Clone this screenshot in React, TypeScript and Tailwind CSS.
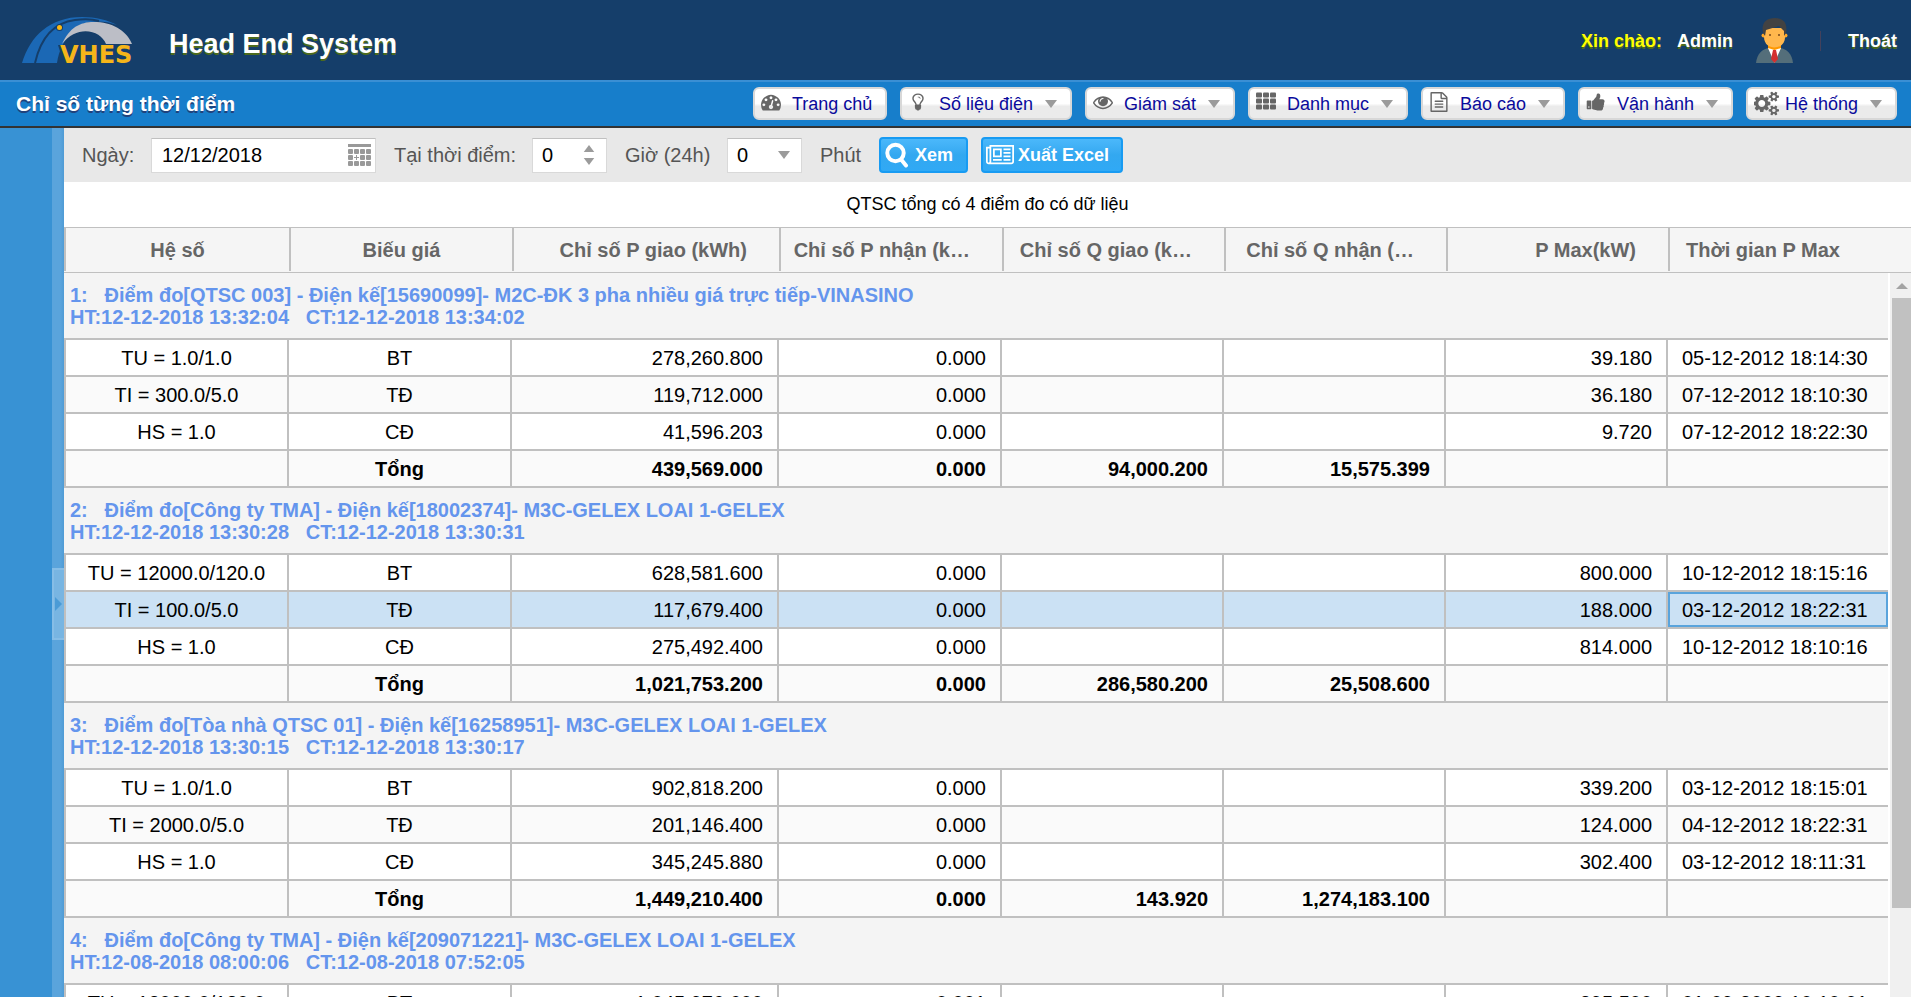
import type { ReactNode } from "react";
import clsx from "clsx";

type IconProps = { className?: string };

const DashboardIcon = ({ className }: IconProps) => (
  <svg viewBox="0 0 1792 1792" fill="currentColor" className={className}>
    <path d="M384 1152q0-53-37.5-90.5t-90.5-37.5-90.5 37.5-37.5 90.5 37.5 90.5 90.5 37.5 90.5-37.5 37.5-90.5zm192-448q0-53-37.5-90.5t-90.5-37.5-90.5 37.5-37.5 90.5 37.5 90.5 90.5 37.5 90.5-37.5 37.5-90.5zm428 481l101-382q6-26-7.5-48.5t-38.5-29.5-48 6.5-30 39.5l-101 382q-60 5-107 43.5t-63 98.5q-20 77 20 146t117 89 146-20 89-117q16-60-6-117t-72-91zm660-33q0-53-37.5-90.5t-90.5-37.5-90.5 37.5-37.5 90.5 37.5 90.5 90.5 37.5 90.5-37.5 37.5-90.5zm-640-640q0-53-37.5-90.5t-90.5-37.5-90.5 37.5-37.5 90.5 37.5 90.5 90.5 37.5 90.5-37.5 37.5-90.5zm448 192q0-53-37.5-90.5t-90.5-37.5-90.5 37.5-37.5 90.5 37.5 90.5 90.5 37.5 90.5-37.5 37.5-90.5zm320 448q0 261-141 483-19 29-54 29h-1402q-35 0-54-29-141-221-141-483 0-182 71-348t191-286 286-191 348-71 348 71 286 191 191 286 71 348z" />
  </svg>
);

const BulbIcon = ({ className }: IconProps) => (
  <svg viewBox="0 0 1792 1792" fill="currentColor" className={className}>
    <path d="M1120 576q0 13-9.5 22.5t-22.5 9.5-22.5-9.5-9.5-22.5q0-46-54-71t-106-25q-13 0-22.5-9.5t-9.5-22.5 9.5-22.5 22.5-9.5q50 0 99.5 16t87 54 37.5 90zm160 0q0-72-34.5-134t-90-101.5-123-62-136.5-22.5-136.5 22.5-123 62-90 101.5-34.5 134q0 101 68 180 10 11 30.5 33t30.5 33q128 153 141 298h228q13-145 141-298 10-11 30.5-33t30.5-33q68-79 68-180zm128 0q0 155-103 268-45 49-74.5 87t-59.5 95.5-34 107.5q47 28 47 82 0 37-25 64 25 27 25 64 0 52-45 81 13 23 13 47 0 46-31.5 71t-77.5 25q-20 44-60 70t-87 26-87-26-60-70q-46 0-77.5-25t-31.5-71q0-24 13-47-45-29-45-81 0-37 25-64-25-27-25-64 0-54 47-82-4-50-34-107.5t-59.5-95.5-74.5-87q-103-113-103-268 0-99 44.5-184.5t117-142 164-89 186.5-32.5 186.5 32.5 164 89 117 142 44.5 184.5z" />
  </svg>
);

const EyeIcon = ({ className }: IconProps) => (
  <svg viewBox="0 0 1792 1792" fill="currentColor" className={className}>
    <path d="M1664 960q-152-236-381-353 61 104 61 225 0 185-131.5 316.5t-316.5 131.5-316.5-131.5-131.5-316.5q0-121 61-225-229 117-381 353 133 205 333.5 326.5t434.5 121.5 434.5-121.5 333.5-326.5zm-720-384q0-20-14-34t-34-14q-125 0-214.5 89.5t-89.5 214.5q0 20 14 34t34 14 34-14 14-34q0-86 61-147t147-61q20 0 34-14t14-34zm848 384q0 34-20 69-140 230-376.5 368.5t-499.5 138.5-499.5-139-376.5-368q-20-35-20-69t20-69q140-229 376.5-368t499.5-139 499.5 139 376.5 368q20 35 20 69z" />
  </svg>
);

const GridIcon = ({ className }: IconProps) => (
  <svg viewBox="0 0 21 20" fill="currentColor" className={className}>
    {[2, 8, 14].map((y) =>
      [0, 7, 14].map((x) => (
        <rect key={`${x}-${y}`} x={x} y={y} width="6" height="5" rx="1" />
      ))
    )}
  </svg>
);

const FileIcon = ({ className }: IconProps) => (
  <svg viewBox="0 0 1792 1792" fill="currentColor" className={className}>
    <path d="M1596 380q28 28 48 76t20 88v1152q0 40-28 68t-68 28h-1344q-40 0-68-28t-28-68v-1600q0-40 28-68t68-28h896q40 0 88 20t76 48zm-444-244v376h376q-10-29-22-41l-313-313q-12-12-41-22zm384 1528v-1024h-416q-40 0-68-28t-28-68v-416h-768v1536h1280zm-1024-864q0-14 9-23t23-9h704q14 0 23 9t9 23v64q0 14-9 23t-23 9h-704q-14 0-23-9t-9-23v-64zm736 224q14 0 23 9t9 23v64q0 14-9 23t-23 9h-704q-14 0-23-9t-9-23v-64q0-14 9-23t23-9h704zm0 256q14 0 23 9t9 23v64q0 14-9 23t-23 9h-704q-14 0-23-9t-9-23v-64q0-14 9-23t23-9h704z" />
  </svg>
);

const ThumbIcon = ({ className }: IconProps) => (
  <svg viewBox="0 0 1792 1792" fill="currentColor" className={className}>
    <path d="M320 1344q0-26-19-45t-45-19q-27 0-45.5 19t-18.5 45q0 27 18.5 45.5t45.5 18.5q26 0 45-18.5t19-45.5zm160-512v640q0 26-19 45t-45 19h-288q-26 0-45-19t-19-45v-640q0-26 19-45t45-19h288q26 0 45 19t19 45zm1184 0q0 86-55 149 15 44 15 76 3 76-43 137 17 56 0 117-15 57-54 94 9 112-49 181-64 76-197 78h-129q-66 0-144-15.5t-121.5-29-120.5-39.5q-123-43-158-44-26-1-45-19.5t-19-44.5v-641q0-25 18-43.5t43-20.5q24-2 76-59t101-121q68-87 101-120 18-18 31-48t17.5-48.5 13.5-60.5q7-39 12.5-61t19.5-52 34-50q19-19 45-19 46 0 82.5 10.5t60 26 40 40.5 24 45 12 50 5 45 .5 39q0 38-9.5 76t-19 60-27.5 56q-3 6-10 18t-11 22-8 24h277q78 0 135 57t57 135z" />
  </svg>
);

const GearsIcon = ({ className }: IconProps) => (
  <svg viewBox="0 0 1856 1792" fill="currentColor" className={className}>
    <path d="M832 896q0-106-75-181t-181-75-181 75-75 181 75 181 181 75 181-75 75-181zm768 512q0-52-38-90t-90-38-90 38-38 90q0 53 37.5 90.5t90.5 37.5 90.5-37.5 37.5-90.5zm0-1024q0-52-38-90t-90-38-90 38-38 90q0 53 37.5 90.5t90.5 37.5 90.5-37.5 37.5-90.5zm-384 421v185q0 10-7 19.5t-16 10.5l-155 24q-11 35-32 76 34 48 90 115 7 11 7 20 0 12-7 19-23 30-82.5 89.5t-78.5 59.5q-11 0-21-7l-115-90q-37 19-77 31-11 108-23 155-7 24-30 24h-186q-11 0-20-7.5t-10-17.5l-23-153q-34-10-75-31l-118 89q-7 7-20 7-11 0-21-8-144-133-144-160 0-9 7-19 10-14 41-53t47-61q-23-44-35-82l-152-24q-10-1-17-9.5t-7-19.5v-185q0-10 7-19.5t16-10.5l155-24q11-35 32-76-34-48-90-115-7-11-7-20 0-12 7-20 22-30 82-89t79-59q11 0 21 7l115 90q34-18 77-32 11-108 23-154 7-24 30-24h186q11 0 20 7.5t10 17.5l23 153q34 10 75 31l118-89q8-7 20-7 11 0 21 8 144 133 144 160 0 8-7 19-12 16-42 54t-45 60q23 48 34 82l152 23q10 2 17 10.5t7 19.5zm640 533v140q0 16-149 31-12 27-30 52 51 113 51 138 0 4-4 7-122 71-124 71-8 0-46-47t-52-68q-20 2-30 2t-30-2q-14 21-52 68t-46 47q-2 0-124-71-4-3-4-7 0-25 51-138-18-25-30-52-149-15-149-31v-140q0-16 149-31 13-29 30-52-51-113-51-138 0-4 4-7 4-2 35-20t59-34 30-16q8 0 46 46.5t52 67.5q20-2 30-2t30 2q51-71 92-112l6-2q4 0 124 70 4 3 4 7 0 25-51 138 17 23 30 52 149 15 149 31zm0-1024v140q0 16-149 31-12 27-30 52 51 113 51 138 0 4-4 7-122 71-124 71-8 0-46-47t-52-68q-20 2-30 2t-30-2q-14 21-52 68t-46 47q-2 0-124-71-4-3-4-7 0-25 51-138-18-25-30-52-149-15-149-31v-140q0-16 149-31 13-29 30-52-51-113-51-138 0-4 4-7 4-2 35-20t59-34 30-16q8 0 46 46.5t52 67.5q20-2 30-2t30 2q51-71 92-112l6-2q4 0 124 70 4 3 4 7 0 25-51 138 17 23 30 52 149 15 149 31z" />
  </svg>
);

const NewspaperIcon = ({ className }: IconProps) => (
  <svg viewBox="0 128 2048 1536" fill="currentColor" className={className}>
    <path d="M1024 512h-384v384h384v-384zm128 640v128h-640v-128h640zm0-768v640h-640v-640h640zm640 768v128h-512v-128h512zm0-256v128h-512v-128h512zm0-256v128h-512v-128h512zm0-256v128h-512v-128h512zm-1536 960v-960h-128v960q0 26 19 45t45 19 45-19 19-45zm1664 0v-1088h-1536v1088q0 33-11 64h1483q26 0 45-19t19-45zm128-1216v1216q0 80-56 136t-136 56h-1664q-80 0-136-56t-56-136v-1088h256v-128h1792z" />
  </svg>
);

const SearchIcon = ({ className }: IconProps) => (
  <svg viewBox="0 0 24 26" fill="none" stroke="currentColor" className={className}>
    <circle cx="10.5" cy="11" r="8.2" strokeWidth="4" />
    <path d="M16.5 18l4.5 5.5" strokeWidth="4" strokeLinecap="round" />
  </svg>
);

const CalendarIcon = ({ className }: IconProps) => (
  <svg viewBox="0 0 23 22" fill="currentColor" className={className}>
    <rect width="23" height="3" />
    {[5, 11, 17].map((y) =>
      [0, 6, 12, 18].map((x) =>
        x === 6 && y === 11 ? (
          <path key="today" d="M8 11h1v2h2v1h-2v2h-1v-2h-2v-1h2z" />
        ) : (
          <rect key={`${x}-${y}`} x={x} y={y} width="5" height="5" rx="1" />
        )
      )
    )}
  </svg>
);

const CaretDown = ({ className }: IconProps) => (
  <svg viewBox="0 0 12 8" fill="#9b9b9b" className={className}>
    <path d="M0 0h12l-6 8z" />
  </svg>
);

const CaretUp = ({ className }: IconProps) => (
  <svg viewBox="0 0 12 8" fill="#9b9b9b" className={className}>
    <path d="M0 8h12l-6-8z" />
  </svg>
);

const Logo = () => (
  <svg viewBox="0 0 116 48" className="h-12 w-[116px] overflow-visible" role="img" aria-label="VHES">
    <path d="M0 47C8 20 28 1 60 1c14 0 26 3 35 8C78 3 60 5 51 14 42 24 37 34 35 47z" fill="#1b68b5" />
    <path d="M13 47C18 25 30 7 53 4c9-1 17-1 24 1" fill="none" stroke="#153e6a" strokeWidth="2" />
    <path d="M40 28C48 10 60 5 75 6c18 1 31 11 35 22H84C79 14 55 8 40 28z" fill="#bcbec6" />
    <circle cx="37.500" cy="11.500" r="3.500" fill="#153e6a" />
    <circle cx="37.500" cy="11.500" r="2.500" fill="#fdb913" />
    <path d="M36 29h80v19H42z" fill="#153e6a" />
    <text
      x="38"
      y="47"
      fill="#f5b51a"
      className="font-['DejaVu_Sans',sans-serif] text-[24px] font-bold"
    >
      VHES
    </text>
  </svg>
);

const Avatar = () => (
  <svg viewBox="0 0 37 46" className="h-[46px] w-[37px]" aria-hidden="true">
    <path d="M0 45c1-9 6-14 13-15h11c7 1 12 6 13 15z" fill="#546e7a" />
    <path d="M12 26h13v5l-7 4-6-4z" fill="#ff9800" />
    <path d="M12 30l6.500 15L25 30l-6.500 2z" fill="#fff" />
    <path d="M17 32h3l2 9-3.500 4-3.500-4z" fill="#d32f2f" />
    <circle cx="7.500" cy="17.500" r="2" fill="#ffa726" />
    <circle cx="29.500" cy="17.500" r="2" fill="#ffa726" />
    <path d="M8 10h21v9c0 14-21 14-21 0z" fill="#ffb74d" />
    <path d="M7 15C5 5 10 0 19 0c8 0 13 5 11 15l-2 3v-5l-5-5-13 4-1 6z" fill="#424242" />
    <circle cx="14" cy="17" r="1" fill="#784719" />
    <circle cx="23" cy="17" r="1" fill="#784719" />
  </svg>
);

type MenuItem = { label: string; icon: ReactNode; width: string; caret?: boolean };

const menu: MenuItem[] = [
  { label: "Trang chủ", width: "w-[134px]", icon: <DashboardIcon className="mb-1 size-5" /> },
  { label: "Số liệu điện", width: "w-[172px]", caret: true, icon: <BulbIcon className="mb-1 size-5" /> },
  { label: "Giám sát", width: "w-[150px]", caret: true, icon: <EyeIcon className="mb-1 size-5" /> },
  { label: "Danh mục", width: "w-[160px]", caret: true, icon: <GridIcon className="mb-1.5 size-[21px]" /> },
  { label: "Báo cáo", width: "w-[144px]", caret: true, icon: <FileIcon className="mb-1 size-5" /> },
  { label: "Vận hành", width: "w-[155px]", caret: true, icon: <ThumbIcon className="mb-1 size-5" /> },
  { label: "Hệ thống", width: "w-[151px]", caret: true, icon: <GearsIcon className="size-[25px]" /> },
];

const columns = [
  { title: "Hệ số", width: "w-[225px]", align: "text-center" },
  { title: "Biếu giá", width: "w-[223px]", align: "text-center" },
  { title: "Chỉ số P giao (kWh)", width: "w-[267px]", align: "text-right" },
  { title: "Chỉ số P nhận (k…", width: "w-[223px]", align: "text-right" },
  { title: "Chỉ số Q giao (k…", width: "w-[222px]", align: "text-right" },
  { title: "Chỉ số Q nhận (…", width: "w-[222px]", align: "text-right" },
  { title: "P Max(kW)", width: "w-[222px]", align: "text-right" },
  { title: "Thời gian P Max", width: "w-[220px]", align: "text-left" },
];

const groups = [
  {
    title: "1:   Điểm đo[QTSC 003] - Điện kế[15690099]- M2C-ĐK 3 pha nhiều giá trực tiếp-VINASINO",
    time: "HT:12-12-2018 13:32:04   CT:12-12-2018 13:34:02",
    rows: [
      ["TU = 1.0/1.0", "BT", "278,260.800", "0.000", "", "", "39.180", "05-12-2012 18:14:30"],
      ["TI = 300.0/5.0", "TĐ", "119,712.000", "0.000", "", "", "36.180", "07-12-2012 18:10:30"],
      ["HS = 1.0", "CĐ", "41,596.203", "0.000", "", "", "9.720", "07-12-2012 18:22:30"],
      ["", "Tổng", "439,569.000", "0.000", "94,000.200", "15,575.399", "", ""],
    ],
  },
  {
    title: "2:   Điểm đo[Công ty TMA] - Điện kế[18002374]- M3C-GELEX LOAI 1-GELEX",
    time: "HT:12-12-2018 13:30:28   CT:12-12-2018 13:30:31",
    selected: 1,
    rows: [
      ["TU = 12000.0/120.0", "BT", "628,581.600", "0.000", "", "", "800.000", "10-12-2012 18:15:16"],
      ["TI = 100.0/5.0", "TĐ", "117,679.400", "0.000", "", "", "188.000", "03-12-2012 18:22:31"],
      ["HS = 1.0", "CĐ", "275,492.400", "0.000", "", "", "814.000", "10-12-2012 18:10:16"],
      ["", "Tổng", "1,021,753.200", "0.000", "286,580.200", "25,508.600", "", ""],
    ],
  },
  {
    title: "3:   Điểm đo[Tòa nhà QTSC 01] - Điện kế[16258951]- M3C-GELEX LOAI 1-GELEX",
    time: "HT:12-12-2018 13:30:15   CT:12-12-2018 13:30:17",
    rows: [
      ["TU = 1.0/1.0", "BT", "902,818.200", "0.000", "", "", "339.200", "03-12-2012 18:15:01"],
      ["TI = 2000.0/5.0", "TĐ", "201,146.400", "0.000", "", "", "124.000", "04-12-2012 18:22:31"],
      ["HS = 1.0", "CĐ", "345,245.880", "0.000", "", "", "302.400", "03-12-2012 18:11:31"],
      ["", "Tổng", "1,449,210.400", "0.000", "143.920", "1,274,183.100", "", ""],
    ],
  },
  {
    title: "4:   Điểm đo[Công ty TMA] - Điện kế[209071221]- M3C-GELEX LOAI 1-GELEX",
    time: "HT:12-08-2018 08:00:06   CT:12-08-2018 07:52:05",
    rows: [["TU = 12000.0/120.0", "BT", "1,045,976.600", "0.001", "", "", "395.500", "01-09-2009 10:10:01"]],
  },
];

const TopBar = () => (
  <header className="flex h-[82px] shrink-0 items-center border-b-2 border-[#3a8fd4] bg-[#153e6a] pl-[22px] pr-3.5">
    <Logo />
    <h1 className="ml-[31px] pt-2 text-[27px] font-bold text-white [text-shadow:0_2px_0_#4c6a1c]">
      Head End System
    </h1>
    <div className="ml-auto flex items-center pt-0.5 text-lg font-bold text-white [text-shadow:0_2px_0_#4c6a1c]">
      <span className="text-[#ffff00]">Xin chào:</span>
      <span className="ml-[15px]">Admin</span>
      <span className="ml-[23px]">
        <Avatar />
      </span>
      <span className="mx-[27px] h-5 w-px bg-[#43415c]" />
      <a href="#logout">Thoát</a>
    </div>
  </header>
);

const MenuBar = () => (
  <nav className="flex h-[46px] shrink-0 items-center justify-between border-b-2 border-[#333] bg-[#177ecb] pl-4 pr-3.5 pb-px">
    <h2 className="text-[21px] font-bold text-white [text-shadow:0_2px_0_#20427c]">
      Chỉ số từng thời điểm
    </h2>
    <div className="flex gap-[13px]">
      {menu.map((item) => (
        <button
          key={item.label}
          type="button"
          className={clsx(
            "flex h-[33px] items-center rounded-md border-2 border-[#d8d8d8] bg-linear-to-b from-white from-50% to-[#ebebeb] to-60% pl-1.5 text-lg text-[#0a0a9c]",
            item.width
          )}
        >
          <span className="flex w-[31px] shrink-0 items-center text-[#666]">{item.icon}</span>
          <span className="whitespace-nowrap">{item.label}</span>
          {item.caret && <CaretDown className="ml-auto mr-[13px] h-2 w-3" />}
        </button>
      ))}
    </div>
  </nav>
);

const fieldBox = "h-[35px] border border-[#d9d9d9] border-t-[#c0c0c0] bg-white text-black";

const Toolbar = () => (
  <form className="flex h-[54px] shrink-0 items-center bg-[#e8e8e8] pl-[18px] text-xl text-[#555]">
    <label htmlFor="day" className="w-[69px]">
      Ngày:
    </label>
    <div className={clsx("mr-[18px] flex w-[225px] items-center pl-2.5 pr-1", fieldBox)}>
      <input id="day" type="text" defaultValue="12/12/2018" className="w-full min-w-0 outline-none" />
      <CalendarIcon className="h-[22px] w-[23px] shrink-0 text-[#999]" />
    </div>
    <label htmlFor="hour" className="w-[138px] whitespace-nowrap">
      Tại thời điểm:
    </label>
    <div className={clsx("mr-[18px] flex w-[75px] items-center pl-[9px] pr-[11px]", fieldBox)}>
      <input id="hour" type="text" inputMode="numeric" defaultValue="0" className="w-full min-w-0 outline-none" />
      <span className="flex shrink-0 flex-col gap-1.5">
        <CaretUp className="h-[7px] w-3" />
        <CaretDown className="h-[7px] w-3" />
      </span>
    </div>
    <label htmlFor="minute" className="w-[102px] whitespace-nowrap">
      Giờ (24h)
    </label>
    <div className={clsx("mr-[18px] flex w-[75px] items-center pl-[9px] pr-[11px]", fieldBox)}>
      <select id="minute" defaultValue="0" className="w-full min-w-0 appearance-none outline-none">
        <option value="0">0</option>
        <option value="30">30</option>
      </select>
      <CaretDown className="h-2 w-3 shrink-0" />
    </div>
    <span className="w-[59px]">Phút</span>
    <button
      type="button"
      className="mr-[13px] flex h-9 w-[89px] items-center rounded border-2 border-[#189bf2] bg-linear-to-b from-[#4bb8fb] from-0% via-[#33a8f0] via-50% to-[#30a9f5] pl-1 text-lg font-bold text-white"
    >
      <SearchIcon className="mr-1.5 h-[26px] w-6 shrink-0" />
      Xem
    </button>
    <button
      type="button"
      className="flex h-9 w-[142px] items-center rounded border-2 border-[#189bf2] bg-linear-to-b from-[#4bb8fb] from-0% via-[#33a8f0] via-50% to-[#30a9f5] pl-[3px] text-lg font-bold whitespace-nowrap text-white"
    >
      <NewspaperIcon className="mr-1 h-[21px] w-7 shrink-0" />
      Xuất Excel
    </button>
  </form>
);

const Splitter = () => (
  <div className="w-3 shrink-0 bg-linear-to-r from-[#5aa4dc] from-70% to-[#4f9bd5]">
    <button
      type="button"
      aria-label="Mở rộng"
      className="mt-[440px] flex h-[72px] w-3 items-center justify-center border-2 border-r-0 border-[#86bde6] bg-[#78b5e2] pr-0.5"
    >
      <svg viewBox="0 0 7 14" fill="#4b9bd6" className="h-3.5 w-[7px]">
        <path d="M0 0l7 7-7 7z" />
      </svg>
    </button>
  </div>
);

const DataTable = () => (
  <table className="w-full table-fixed border-separate border-spacing-0 text-xl/[22px] text-black">
    <colgroup>
      {columns.map((col) => (
        <col key={col.title} className={col.width} />
      ))}
    </colgroup>
    <thead>
      <tr className="bg-[#f5f5f5]">
        {columns.map((col) => (
          <th key={col.title} className="h-[46px] border-y border-[#c0c0c0] p-0 pb-px font-bold text-[#666]">
            <div
              className={clsx(
                "flex h-[43px] flex-col justify-center border-l-2 border-[#c0c0c0] whitespace-nowrap",
                col.align,
                col.align === "text-right" && "pr-8",
                col.align === "text-left" && "pl-4"
              )}
            >
              {col.title}
            </div>
          </th>
        ))}
      </tr>
    </thead>
    {groups.map((group) => (
      <tbody key={group.title}>
        <tr>
          <th
            colSpan={8}
            scope="rowgroup"
            className="h-[67px] border-b-2 border-[#c0c0c0] bg-[#f4f4f4] py-0 pl-1.5 text-left font-bold whitespace-pre text-[#6495ed]"
          >
            {group.title}
            <br />
            {group.time}
          </th>
        </tr>
        {group.rows.map((row, r) => (
          <tr
            key={row[1]}
            className={clsx(
              r === 3 && "font-bold",
              group.selected === r ? "bg-[#cbe1f4]" : r % 2 ? "bg-[#fafafa]" : "bg-white"
            )}
          >
            {row.map((cell, c) => (
              <td
                key={columns[c].title}
                className={clsx(
                  "h-[37px] border-b-2 border-[#c0c0c0] px-3.5 pt-px pb-0 whitespace-nowrap",
                  c === 0 && "border-l-2",
                  c < 7 && "border-r-2",
                  c === 7 && group.selected === r && "shadow-[inset_0_0_0_2px_#5aa4dc]",
                  columns[c].align
                )}
              >
                {cell}
              </td>
            ))}
          </tr>
        ))}
      </tbody>
    ))}
  </table>
);

const ScrollTrack = () => (
  <div className="flex w-[23px] shrink-0 flex-col">
    <div className="h-[46px] shrink-0 border-y border-[#c0c0c0] bg-[#f5f5f5]" />
    <div className="ml-0.5 flex grow flex-col bg-[#f0f0f0] pl-0.5">
      <div className="flex h-[25px] shrink-0 items-center justify-center">
        <svg viewBox="0 0 12 6" fill="#a3a3a3" className="h-1.5 w-3">
          <path d="M0 6h12l-6-6z" />
        </svg>
      </div>
      <div className="h-[610px] bg-[#c1c1c1]" />
    </div>
  </div>
);

export default function App() {
  return (
    <div className="flex h-screen flex-col overflow-hidden bg-white font-['Liberation_Sans',Arial,sans-serif]">
      <TopBar />
      <MenuBar />
      <div className="flex min-h-0 grow">
        <aside className="w-[52px] shrink-0 bg-[#3892d4]" />
        <Splitter />
        <main className="flex min-w-0 grow flex-col">
          <Toolbar />
          <p className="flex h-[45px] shrink-0 items-center justify-center pb-0.5 text-lg text-black">
            QTSC tổng có 4 điểm đo có dữ liệu
          </p>
          <div className="flex min-h-0 grow overflow-hidden">
            <div className="min-w-0 grow">
              <DataTable />
            </div>
            <ScrollTrack />
          </div>
        </main>
      </div>
    </div>
  );
}
